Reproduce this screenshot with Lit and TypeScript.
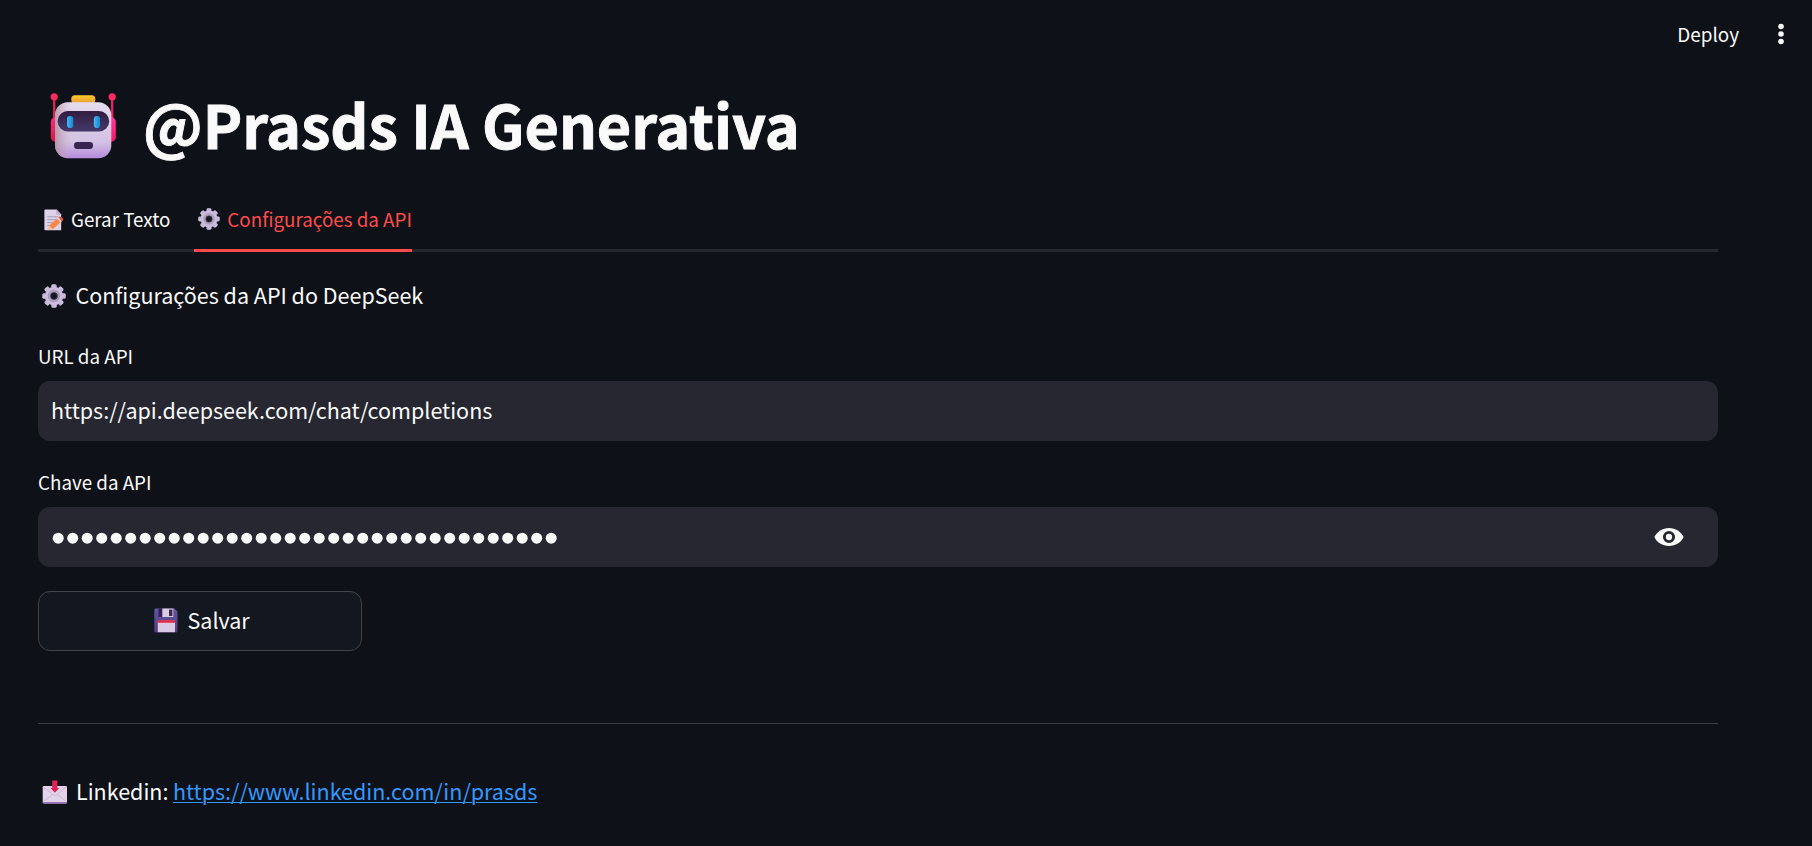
import { LitElement, html, css, svg } from "lit";
import { customElement } from "lit/decorators.js";

const gear = (id: string) => html`<svg viewBox="0 0 32 32">
  <defs><linearGradient id=${id} x1="0" y1="0" x2="0.6" y2="1"><stop offset="0" stop-color="#dccfe8"/><stop offset="1" stop-color="#b3a0cd"/></linearGradient></defs>
  <g fill="url(#${id})">
    ${[0, 45, 90, 135, 180, 225, 270, 315].map(a => svg`<rect x="12.4" y="0.4" width="7.2" height="8" rx="2" transform="rotate(${a} 16 16)"/>`)}
  </g>
  <circle cx="16" cy="16" r="8.6" fill="none" stroke="#cabcda" stroke-width="7.4"/>
  <circle cx="16" cy="16" r="6.6" fill="none" stroke="#ab9dbd" stroke-width="3.4"/>
  <circle cx="16" cy="16" r="4.7" fill="#15161e" stroke="#6a6078" stroke-width=".8"/>
</svg>`;

const robot = html`<svg viewBox="0 0 66 66">
  <defs>
    <linearGradient id="face" x1="0" y1="0" x2="0" y2="1"><stop offset="0" stop-color="#e6dcee"/><stop offset=".72" stop-color="#d3c1e3"/><stop offset="1" stop-color="#b48bdc"/></linearGradient>
    <linearGradient id="shade" x1="0" y1="0" x2="1" y2="0"><stop offset="0" stop-color="#b08c9c" stop-opacity=".8"/><stop offset=".3" stop-color="#c8b2cc" stop-opacity="0"/></linearGradient>
    <linearGradient id="visor" x1="0" y1="0" x2="0" y2="1"><stop offset="0" stop-color="#321c3f"/><stop offset="1" stop-color="#443a6c"/></linearGradient>
    <linearGradient id="hat" x1="0" y1="0" x2="0" y2="1"><stop offset="0" stop-color="#ffc928"/><stop offset="1" stop-color="#e79a3c"/></linearGradient>
    <linearGradient id="ear" x1="0" y1="0" x2="0" y2="1"><stop offset="0" stop-color="#f42f7c"/><stop offset="1" stop-color="#dc1745"/></linearGradient>
    <linearGradient id="ear2" x1="0" y1="0" x2="0" y2="1"><stop offset="0" stop-color="#ff3b9c"/><stop offset="1" stop-color="#f5156a"/></linearGradient>
    <linearGradient id="eye" x1="0" y1="0" x2="1" y2="0"><stop offset="0" stop-color="#48b5f0"/><stop offset="1" stop-color="#1685d1"/></linearGradient>
  </defs>
  <rect x="3" y="4" width="2.4" height="22" fill="#d92452"/><rect x="61" y="4" width="2.4" height="22" fill="#e3245c"/>
  <circle cx="4.2" cy="3.8" r="3.6" fill="#f82b5e"/><circle cx="62.2" cy="3.8" r="3.6" fill="#ff2b62"/>
  <rect x="0.8" y="24" width="12" height="25" rx="5" fill="url(#ear)"/><rect x="53.8" y="24" width="12" height="25" rx="5" fill="url(#ear2)"/>
  <rect x="21.3" y="2.2" width="24" height="8.5" rx="3.6" fill="url(#hat)"/>
  <rect x="5" y="9.2" width="56.3" height="56" rx="13" fill="url(#face)"/>
  <rect x="5" y="9.2" width="56.3" height="56" rx="13" fill="url(#shade)"/>
  <rect x="7.6" y="18" width="51.6" height="20.6" rx="10.3" fill="url(#visor)"/>
  <rect x="17" y="23" width="6.3" height="12" rx="3.1" fill="url(#eye)"/><rect x="43.8" y="23" width="6.3" height="12" rx="3.1" fill="url(#eye)"/>
  <rect x="24" y="49" width="19" height="7" rx="3.3" fill="#372450"/>
</svg>`;

const memo = html`<svg viewBox="0 0 20 22">
  <path d="M1.200 .6H12.6L17.200 5.400V21.300H1.200Q.4 21.300 .4 20.500V1.400Q.4 .6 1.200 .6Z" fill="#ddd2e6"/>
  <path d="M12.200 .6L17.400 5.800H13Q12.200 5.800 12.200 5Z" fill="#c1b0d3"/>
  <path d="M3.300 7.800H14M3.300 10.700H12M3.300 13.600H9.500M3.300 16.500H6" stroke="#a79bb4" stroke-width="1"/>
  <path d="M3.800 21.300L5.300 16.400L9 20.100Z" fill="#f2bd9a"/>
  <path d="M5.200 16.500L13 9.600L16.600 13.200L8.800 20.300Z" fill="#fa8742"/>
  <path d="M13 9.600L14.600 8.200L18.200 11.900L16.600 13.200Z" fill="#e3d7e8"/>
  <path d="M14.300 8.500L15.500 7.600Q16.200 7.200 17 8L18.700 9.600Q19.700 10.600 19 11.400L17.900 12.200Z" fill="#f4503f"/>
</svg>`;

const floppy = html`<svg viewBox="0 0 24 25">
  <defs><linearGradient id="disk" x1="0" y1="0" x2="0" y2="1"><stop offset="0" stop-color="#5a57a4"/><stop offset="1" stop-color="#593b7c"/></linearGradient></defs>
  <path d="M1.5 .5H20.5L23.5 3.5V23Q23.5 24.5 22 24.5H1.5Q.3 24.5 .3 23V2Q.3 .5 1.5 .5Z" fill="url(#disk)"/>
  <path d="M4.5 .5H20V9H4.5Z" fill="#321f54"/><path d="M8.3 .5H19.5V9H8.3Z" fill="#d8cce3"/><rect x="15" y="1.6" width="3.4" height="6.4" fill="#402457"/>
  <path d="M3.8 12.6H21V24.2H3.8Z" fill="#dac9e6"/><path d="M3.8 14.8V13Q3.8 12.2 4.6 12.2H20.2Q21 12.2 21 13V14.8Z" fill="#e52743"/>
</svg>`;

const envelope = html`<svg viewBox="0 0 26 24">
  <rect x=".7" y="6" width="24.3" height="17.4" rx="1.2" fill="#e2d3ea"/>
  <path d="M.8 22H25V22.6Q25 23.6 24 23.6H1.8Q.8 23.6 .8 22.6Z" fill="#9673b8"/>
  <path d="M1.5 21.5L10 14.8M24.2 21.5L15.8 14.8M1.3 6.8L11 14.6Q12.9 16 14.8 14.6L24.4 6.8" fill="none" stroke="#c6b4d2" stroke-width=".9"/>
  <path d="M10.2 .4H15.4V8H17.2L12.9 12.8L8.4 8H10.2Z" fill="#df2455"/>
</svg>`;

@customElement("app-root")
export class AppRoot extends LitElement {
  static styles = css`
    :host { display: block; height: 846px; overflow: hidden; background: #0e1117; color: #fafafa;
      font-family: "Noto Sans CJK JP", "Noto Sans CJK SC", sans-serif; font-size: 21.5px; line-height: 36px; }
    * { box-sizing: border-box; }
    svg { display: block; width: 100%; height: 100%; }
    .top { height: 80px; padding: 16px 24px 0 0; display: flex; justify-content: flex-end; align-items: flex-start; }
    .deploy { font-size: 18.9px; margin-right: 35px; }
    .menu { width: 14px; height: 34px; margin-top: 1px; }
    main { width: 1680px; margin-left: 38px; display: flex; flex-direction: column; }
    h1 { margin: 0; height: 90px; display: flex; font-size: 59.3px; line-height: 87px; font-weight: 700; }
    .title { -webkit-text-stroke: 0.9px #fafafa; letter-spacing: -0.06px; }
    .robot { width: 66px; height: 66px; margin: 13px 27px 0 12px; }
    .tabs { height: 82px; display: flex; border-bottom: 3px solid #26282e; font-size: 18.8px; }
    .tab { display: flex; height: 82px; padding-top: 31px; }
    .tab.active { color: #ff4b4b; border-bottom: 3px solid #ff4b4b; margin-left: 23.5px; }
    .memo { width: 20px; height: 22px; margin: 8px 7px 0 6px; }
    .g1 { width: 22px; height: 22px; margin: 7px 7px 0 4.5px; }
    .row { display: flex; height: 36px; }
    .sub { margin-top: 25px; }
    .g2 { width: 24px; height: 24px; margin: 7px 9.5px 0 4px; }
    label { display: block; font-size: 18.8px; height: 36px; }
    .l1 { margin-top: 25px; }
    .l2 { margin-top: 23px; }
    .box { height: 60px; margin-top: 7px; border-radius: 12px; background: #262730; display: flex; align-items: center; padding: 0 34px 0 13px; }
    .url { padding-bottom: 2px; }
    .dots { flex: 1; height: 60px; }
    .dots svg { width: 520px; }
    .eye { width: 30px; height: 20px; }
    button { width: 324px; height: 60px; margin: 24px 0 0; padding: 0 0 0 115px; display: flex; border: 1px solid #41444b; border-radius: 12px;
      background: #131720; color: inherit; font: inherit; align-items: flex-start; }
    .disk { width: 24px; height: 25px; margin: 16px 9.5px 0 0; }
    .save { margin-top: 10px; }
    .rule { height: 1px; background: #3b3d41; margin-top: 72px; }
    .foot { margin-top: 49px; }
    .mail { width: 26px; height: 24px; margin: 7px 8.5px 0 3.5px; }
    a { color: #3399ff; margin-left: 4.5px; letter-spacing: -0.01px; text-decoration: underline; text-decoration-thickness: 1px; text-underline-offset: 2px; }
  `;

  render() {
    return html`
      <div class="top">
        <span class="deploy">Deploy</span>
        <svg class="menu" viewBox="0 0 14 34"><g fill="#fafafa"><circle cx="7" cy="9.5" r="2.8"/><circle cx="7" cy="17" r="2.8"/><circle cx="7" cy="24.5" r="2.8"/></g></svg>
      </div>
      <main>
        <h1><span class="robot">${robot}</span><span class="title">@Prasds IA Generativa</span></h1>
        <div class="tabs">
          <div class="tab"><span class="memo">${memo}</span><span>Gerar Texto</span></div>
          <div class="tab active"><span class="g1">${gear("ga")}</span><span>Configurações da API</span></div>
        </div>
        <div class="row sub"><span class="g2">${gear("gb")}</span><span>Configurações da API do DeepSeek</span></div>
        <label class="l1">URL da API</label>
        <div class="box"><span class="url">https://api.deepseek.com/chat/completions</span></div>
        <label class="l2">Chave da API</label>
        <div class="box">
          <div class="dots"><svg viewBox="0 0 520 60">${Array.from({ length: 35 }, (_, i) => svg`<circle cx=${7.2 + i * 14.5} cy="31.2" r="5.5" fill="#fafafa"/>`)}</svg></div>
          <span class="eye"><svg viewBox="0 0 30 20"><path d="M15 .9C8.4 .9 2.8 4.7 .4 10C2.8 15.3 8.4 19 15 19S27.2 15.3 29.6 10C27.2 4.7 21.6 .9 15 .9Z" fill="#fafafa"/><circle cx="15" cy="10" r="4.6" fill="#fafafa" stroke="#262730" stroke-width="2.9"/></svg></span>
        </div>
        <button><span class="disk">${floppy}</span><span class="save">Salvar</span></button>
        <div class="rule"></div>
        <div class="row foot"><span class="mail">${envelope}</span><span>Linkedin:</span><a>https://www.linkedin.com/in/prasds</a></div>
      </main>`;
  }
}
